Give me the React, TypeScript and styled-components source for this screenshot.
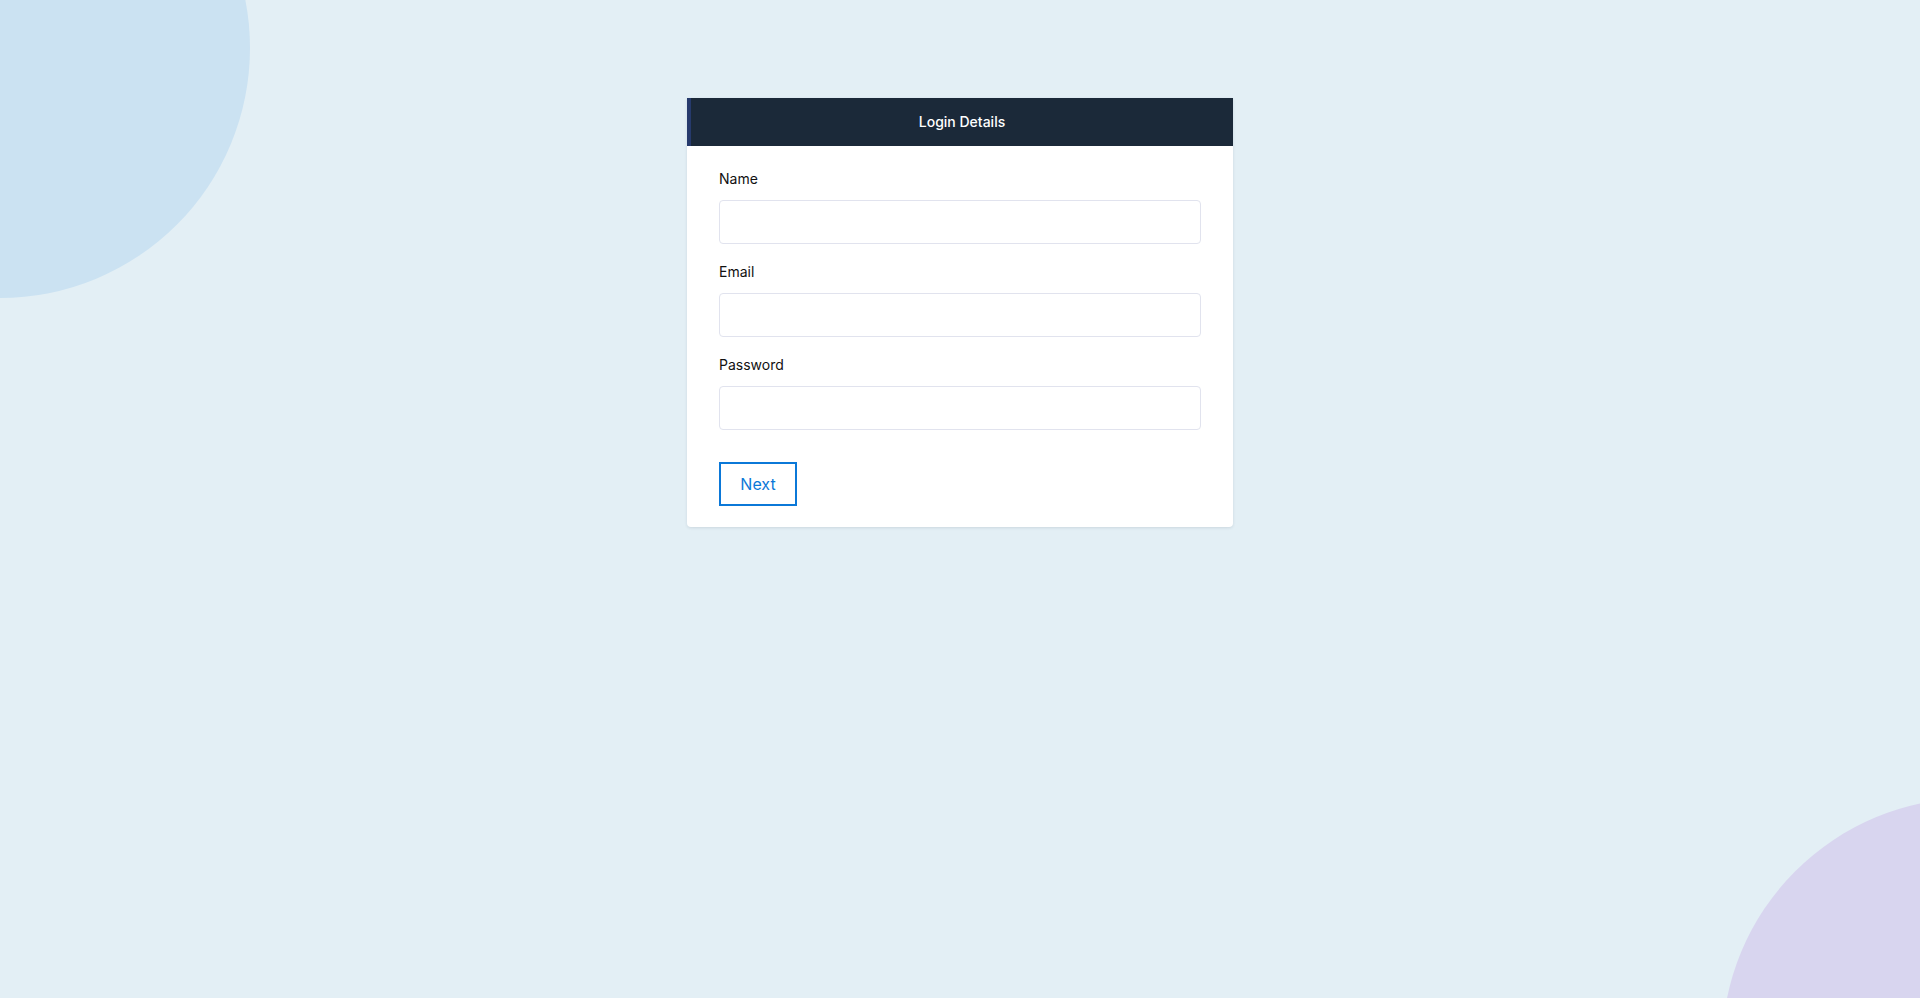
import React from 'react';
import styled, { createGlobalStyle } from 'styled-components';

const GlobalStyle = createGlobalStyle`
	html, body {
		margin: 0;
		padding: 0;
		height: 100%;
	}
	body {
		background: #e3eff5;
		font-family: Inter, "Noto Sans", "Liberation Sans", sans-serif;
		overflow: hidden;
	}
`;

const Page = styled.div`
	position: relative;
	width: 100%;
	height: 998px;
	overflow: hidden;
	padding-top: 98px;
	box-sizing: border-box;
`;

const Blob = styled.div<{ $color: string }>`
	position: absolute;
	width: 500px;
	height: 500px;
	border-radius: 50%;
	background: ${(p) => p.$color};
`;

const TopBlob = styled(Blob)`
	left: -250px;
	top: -202px;
`;

const BottomBlob = styled(Blob)`
	left: 1722px;
	top: 798px;
`;

const Card = styled.div`
	position: relative;
	width: 546px;
	margin: 0 auto;
	background: #ffffff;
	border-radius: 0 0 4px 4px;
	box-shadow: 0 1px 3px rgba(30, 50, 70, 0.12);
	z-index: 1;
`;

const Header = styled.div`
	height: 48px;
	box-sizing: border-box;
	padding-bottom: 2px;
	display: flex;
	align-items: center;
	justify-content: center;
	background: #1b2939;
	border-left: 4px solid #263a6c;
	color: #ffffff;
	font-size: 14px;
	font-weight: 500;
`;

const Form = styled.form`
	display: flex;
	flex-direction: column;
	padding: 23px 32px 21px;
`;

const Field = styled.div`
	display: flex;
	flex-direction: column;
	margin-bottom: 18px;
`;

const Label = styled.label`
	font-size: 14px;
	line-height: 19px;
	color: #111111;
	margin-bottom: 12px;
`;

const Input = styled.input`
	height: 44px;
	box-sizing: border-box;
	border: 1px solid #e1e3ee;
	border-radius: 4px;
	background: #fff;
	padding: 0 12px;
	font: inherit;
	outline: none;
`;

const Actions = styled.div`
	display: flex;
	padding-top: 14px;
`;

const NextButton = styled.button`
	width: 78px;
	height: 44px;
	box-sizing: border-box;
	border: 2px solid #0b78d8;
	background: #fff;
	color: #0b78d8;
	font-family: inherit;
	font-size: 16px;
	font-weight: 400;
	cursor: pointer;
`;

const fields = ['Name', 'Email', 'Password'];

export default function App() {
	return (
		<Page>
			<GlobalStyle />
			<TopBlob $color="#cbe2f2" />
			<BottomBlob $color="#d8d5ef" />
			<Card>
				<Header>Login Details</Header>
				<Form onSubmit={(e) => e.preventDefault()}>
					{fields.map((f) => (
						<Field key={f}>
							<Label>{f}</Label>
							<Input type={f === 'Password' ? 'password' : 'text'} />
						</Field>
					))}
					<Actions>
						<NextButton type="submit">Next</NextButton>
					</Actions>
				</Form>
			</Card>
		</Page>
	);
}
